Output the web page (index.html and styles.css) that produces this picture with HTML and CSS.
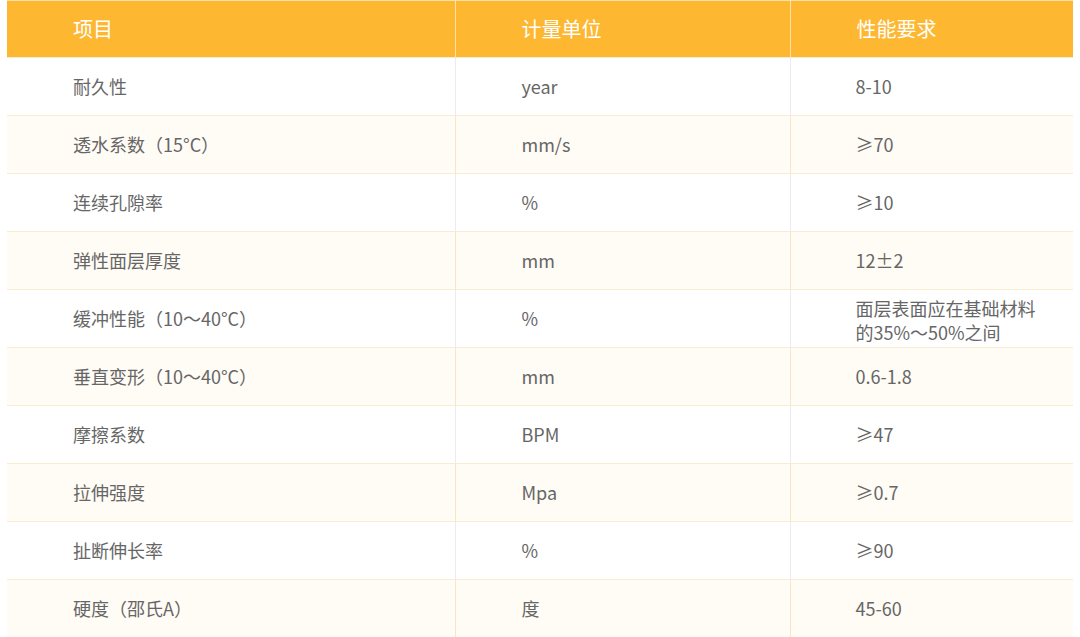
FILE: index.html
```html
<!DOCTYPE html>
<html lang="zh">
<head>
<meta charset="utf-8">
<link rel="stylesheet" href="styles.css">
</head>
<body>
<table class="spec">
<colgroup><col class="c1"><col class="c2"><col class="c3"></colgroup>
<thead>
<tr><th>项目</th><th>计量单位</th><th>性能要求</th></tr>
</thead>
<tbody>
<tr><td>耐久性</td><td>year</td><td>8-10</td></tr>
<tr><td>透水系数（15°C）</td><td>mm/s</td><td>≥70</td></tr>
<tr><td>连续孔隙率</td><td>%</td><td>≥10</td></tr>
<tr><td>弹性面层厚度</td><td>mm</td><td>12±2</td></tr>
<tr><td>缓冲性能（10～40°C）</td><td>%</td><td class="multi">面层表面应在基础材料<br>的35%～50%之间</td></tr>
<tr><td>垂直变形（10～40°C）</td><td>mm</td><td>0.6-1.8</td></tr>
<tr><td>摩擦系数</td><td>BPM</td><td>≥47</td></tr>
<tr><td>拉伸强度</td><td>Mpa</td><td>≥0.7</td></tr>
<tr><td>扯断伸长率</td><td>%</td><td>≥90</td></tr>
<tr><td>硬度（邵氏A）</td><td>度</td><td>45-60</td></tr>
</tbody>
</table>
</body>
</html>
```
FILE: styles.css
```css
html, body {
  margin: 0;
  padding: 0;
  background: #ffffff;
}
body {
  padding: 0 7px;
  font-family: "Noto Sans CJK SC", "Noto Sans", sans-serif;
}
.spec {
  width: 1066px;
  border-collapse: collapse;
  table-layout: fixed;
}
.c1 { width: 448px; }
.c2 { width: 335px; }
.c3 { width: 283px; }
.spec th {
  background: #fdb731;
  color: #ffffff;
  font-weight: 400;
  font-size: 20px;
  line-height: 24px;
  text-align: left;
  height: 57px;
  padding: 0 0 0 66px;
  border-left: 1px solid #fde2a8;
  border-top: 1px solid #fde2a8;
  box-sizing: border-box;
}
.spec th:first-child { border-left: none; }
.spec td {
  height: 58px;
  box-sizing: border-box;
  padding: 0 0 2px 66px;
  color: #666666;
  font-size: 18px;
  line-height: 24px;
  border-top: 1px solid #faecd2;
  border-left: 1px solid #ececec;
  vertical-align: middle;
}
.spec td:first-child { border-left: none; }
.spec tbody tr:nth-child(even) td {
  background: #fffbf5;
  border-left-color: #f8e6c4;
}
.spec tbody tr:nth-child(even) td:first-child { border-left: none; }
.spec td:nth-child(3) { padding-left: 65px; }
.spec td.multi { padding: 2px 2px 0 65px; line-height: 24px; }
```
